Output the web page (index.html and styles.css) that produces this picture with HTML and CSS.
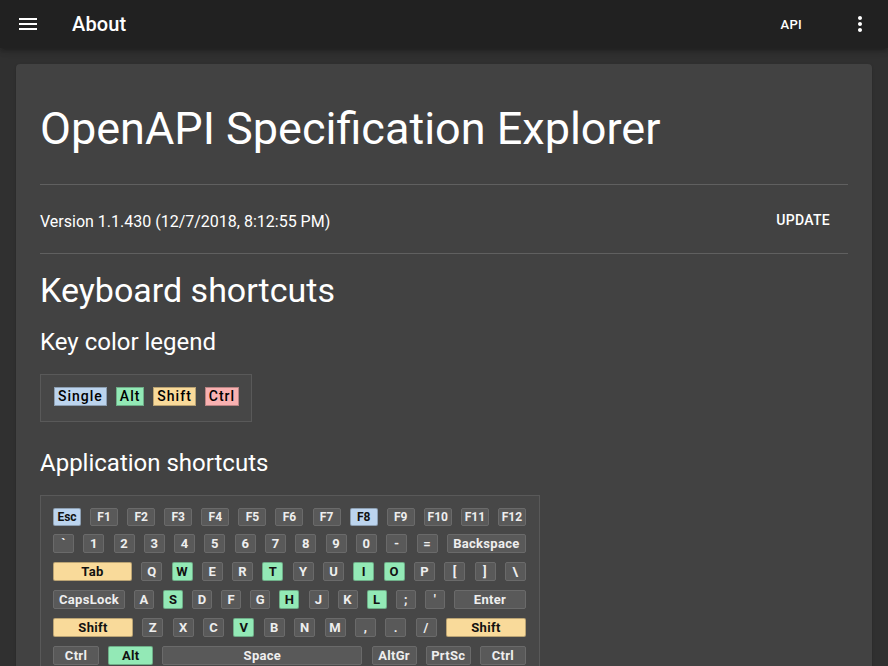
FILE: index.html
```html
<!DOCTYPE html>
<html>
<head>
<meta charset="utf-8">
<link rel="stylesheet" href="styles.css">
</head>
<body>
<header class="appbar">
  <button class="icon-btn menu" aria-label="menu">
    <svg width="24" height="24" viewBox="0 0 24 24"><path fill="#fff" d="M3 18h18v-2H3v2zm0-5h18v-2H3v2zm0-7v2h18V6H3z"/></svg>
  </button>
  <div class="title">About</div>
  <div class="spacer"></div>
  <button class="text-btn">API</button>
  <button class="icon-btn more" aria-label="more">
    <svg width="24" height="24" viewBox="0 0 24 24"><path fill="#fff" d="M12 8c1.1 0 2-.9 2-2s-.9-2-2-2-2 .9-2 2 .9 2 2 2zm0 2c-1.1 0-2 .9-2 2s.9 2 2 2 2-.9 2-2-.9-2-2-2zm0 6c-1.1 0-2 .9-2 2s.9 2 2 2 2-.9 2-2-.9-2-2-2z"/></svg>
  </button>
</header>
<main class="page">
  <section class="card">
    <h1 class="display">OpenAPI Specification Explorer</h1>
    <hr class="divider">
    <div class="version-row">
      <span>Version 1.1.430 (12/7/2018, 8:12:55 PM)</span>
      <button class="text-btn update">UPDATE</button>
    </div>
    <hr class="divider">
    <h2 class="h-shortcuts">Keyboard shortcuts</h2>
    <h3 class="h-sub">Key color legend</h3>
    <div class="legend">
      <span class="lkey single">Single</span>
      <span class="lkey alt">Alt</span>
      <span class="lkey shift">Shift</span>
      <span class="lkey ctrl">Ctrl</span>
    </div>
    <h3 class="h-sub app">Application shortcuts</h3>
    <div class="keyboard">
      <div class="krow frow">
        <span class="key fk single">Esc</span>
        <span class="key fk">F1</span>
        <span class="key fk">F2</span>
        <span class="key fk">F3</span>
        <span class="key fk">F4</span>
        <span class="key fk">F5</span>
        <span class="key fk">F6</span>
        <span class="key fk">F7</span>
        <span class="key fk single">F8</span>
        <span class="key fk">F9</span>
        <span class="key fk">F10</span>
        <span class="key fk">F11</span>
        <span class="key fk">F12</span>
      </div>
      <div class="krow">
        <span class="key">`</span>
        <span class="key">1</span>
        <span class="key">2</span>
        <span class="key">3</span>
        <span class="key">4</span>
        <span class="key">5</span>
        <span class="key">6</span>
        <span class="key">7</span>
        <span class="key">8</span>
        <span class="key">9</span>
        <span class="key">0</span>
        <span class="key">-</span>
        <span class="key">=</span>
        <span class="key wide79">Backspace</span>
      </div>
      <div class="krow">
        <span class="key wide79 shift">Tab</span>
        <span class="key">Q</span>
        <span class="key alt">W</span>
        <span class="key">E</span>
        <span class="key">R</span>
        <span class="key alt">T</span>
        <span class="key">Y</span>
        <span class="key">U</span>
        <span class="key alt">I</span>
        <span class="key alt">O</span>
        <span class="key">P</span>
        <span class="key">[</span>
        <span class="key">]</span>
        <span class="key">\</span>
      </div>
      <div class="krow">
        <span class="key wide72">CapsLock</span>
        <span class="key n20">A</span>
        <span class="key n20 alt">S</span>
        <span class="key n20">D</span>
        <span class="key n20">F</span>
        <span class="key n20">G</span>
        <span class="key n20 alt">H</span>
        <span class="key n20">J</span>
        <span class="key n20">K</span>
        <span class="key n20 alt">L</span>
        <span class="key n20">;</span>
        <span class="key n20">'</span>
        <span class="key wide72">Enter</span>
      </div>
      <div class="krow">
        <span class="key wide80 shift">Shift</span>
        <span class="key">Z</span>
        <span class="key">X</span>
        <span class="key">C</span>
        <span class="key alt">V</span>
        <span class="key">B</span>
        <span class="key">N</span>
        <span class="key">M</span>
        <span class="key">,</span>
        <span class="key">.</span>
        <span class="key">/</span>
        <span class="key wide80 shift">Shift</span>
      </div>
      <div class="krow">
        <span class="key w46">Ctrl</span>
        <span class="key w45 alt">Alt</span>
        <span class="key space">Space</span>
        <span class="key w45">AltGr</span>
        <span class="key w45">PrtSc</span>
        <span class="key w46">Ctrl</span>
      </div>
    </div>
  </section>
</main>
</body>
</html>
```

FILE: styles.css
```css
* { box-sizing: border-box; }
html, body {
  margin: 0;
  padding: 0;
  background: #303030;
  color: #fff;
  font-family: Roboto, "Noto Sans", sans-serif;
  overflow: hidden;
}
button {
  font-family: inherit;
  border: 0;
  background: none;
  color: #fff;
  cursor: pointer;
  padding: 0;
}
.appbar {
  height: 48px;
  background: #212121;
  display: flex;
  align-items: center;
  padding: 0 4px 0 16px;
  box-shadow: 0 2px 4px -1px rgba(0,0,0,.2), 0 4px 5px 0 rgba(0,0,0,.14), 0 1px 10px 0 rgba(0,0,0,.12);
  position: relative;
  z-index: 1;
}
.icon-btn {
  width: 24px;
  height: 24px;
  display: flex;
  align-items: center;
  justify-content: center;
}
.menu { margin-right: 32px; }
.title {
  font-size: 20px;
  font-weight: 500;
  letter-spacing: .15px;
}
.spacer { flex: 1; }
.text-btn {
  font-size: 14px;
  font-weight: 500;
  letter-spacing: .3px;
  height: 36px;
  padding: 0 16px;
  text-transform: uppercase;
}
.appbar .text-btn { margin-right: 28px; font-size: 13px; padding-right: 18px; }
.more { width: 24px; margin-right: 12px; }

.page { padding: 16px; }
.card {
  background: #424242;
  border-radius: 4px;
  padding: 24px 24px 40px;
  box-shadow: 0 2px 1px -1px rgba(0,0,0,.2), 0 1px 1px 0 rgba(0,0,0,.14), 0 1px 3px 0 rgba(0,0,0,.12);
  height: 700px;
}
.display {
  font-size: 45px;
  font-weight: 400;
  line-height: 48px;
  margin: 17px 0 0;
  letter-spacing: 0;
}
.divider {
  border: 0;
  height: 1px;
  background: rgba(255,255,255,.16);
  margin: 0;
}
.display + .divider { margin-top: 31px; }
.version-row {
  display: flex;
  align-items: center;
  justify-content: space-between;
  height: 68px;
  padding-top: 4px;
  font-size: 16px;
}
.update { padding: 0 18px; margin-top: -2px; }
.h-shortcuts {
  font-size: 34px;
  font-weight: 400;
  line-height: 40px;
  margin: 16px 0 0;
}
.h-sub {
  font-size: 24px;
  font-weight: 400;
  line-height: 32px;
  margin: 16px 0 0;
}
.h-sub.app { margin-top: 25px; }
.legend {
  display: inline-flex;
  gap: 9px;
  margin-top: 16px;
  padding: 12px 12px 15px 13px;
  background: #474747;
  border: 1px solid #595959;
}
.lkey {
  height: 19px;
  padding: 0 3px;
  font-size: 14px;
  font-weight: 500;
  letter-spacing: 1px;
  line-height: 17px;
  color: #000;
  border: 1px solid rgba(0,0,0,.25);
}
.single { background: #bcd4ee; }
.alt { background: #93e9b6; }
.shift { background: #f9da9a; }
.ctrl { background: #f9b1b1; }

.keyboard {
  margin-top: 16px;
  width: 500px;
  padding: 12px 13px 20px 12px;
  background: #474747;
  border: 1px solid #595959;
  display: flex;
  flex-direction: column;
  gap: 9px;
}
.krow {
  display: flex;
  justify-content: space-between;
  height: 19px;
}
.frow { height: 18px; margin-bottom: -1px; }
.key {
  width: 21px;
  height: 19px;
  background: #595959;
  border: 1px solid #6a6a6a;
  border-radius: 2px;
  color: #eee;
  font-size: 13px;
  font-weight: 700;
  line-height: 17px;
  text-align: center;
  white-space: nowrap;
  letter-spacing: .3px;
  overflow: hidden;
}
.key.fk {
  width: 28px;
  height: 18px;
  font-size: 12px;
  font-weight: 700;
  line-height: 16px;
  letter-spacing: 0;
}
.key.single { background: #bcd4ee; }
.key.alt { background: #93e9b6; }
.key.shift { background: #f9da9a; }
.key.ctrl { background: #f9b1b1; }
.key.single, .key.alt, .key.shift, .key.ctrl {
  color: #111;
  border-color: rgba(0,0,0,.25);
}
.key.n20 { width: 20px; }
.wide79 { width: 79px; }
.wide72 { width: 72px; }
.wide80 { width: 80px; }
.w46 { width: 46px; }
.w45 { width: 45px; }
.space { width: 200px; }
```
